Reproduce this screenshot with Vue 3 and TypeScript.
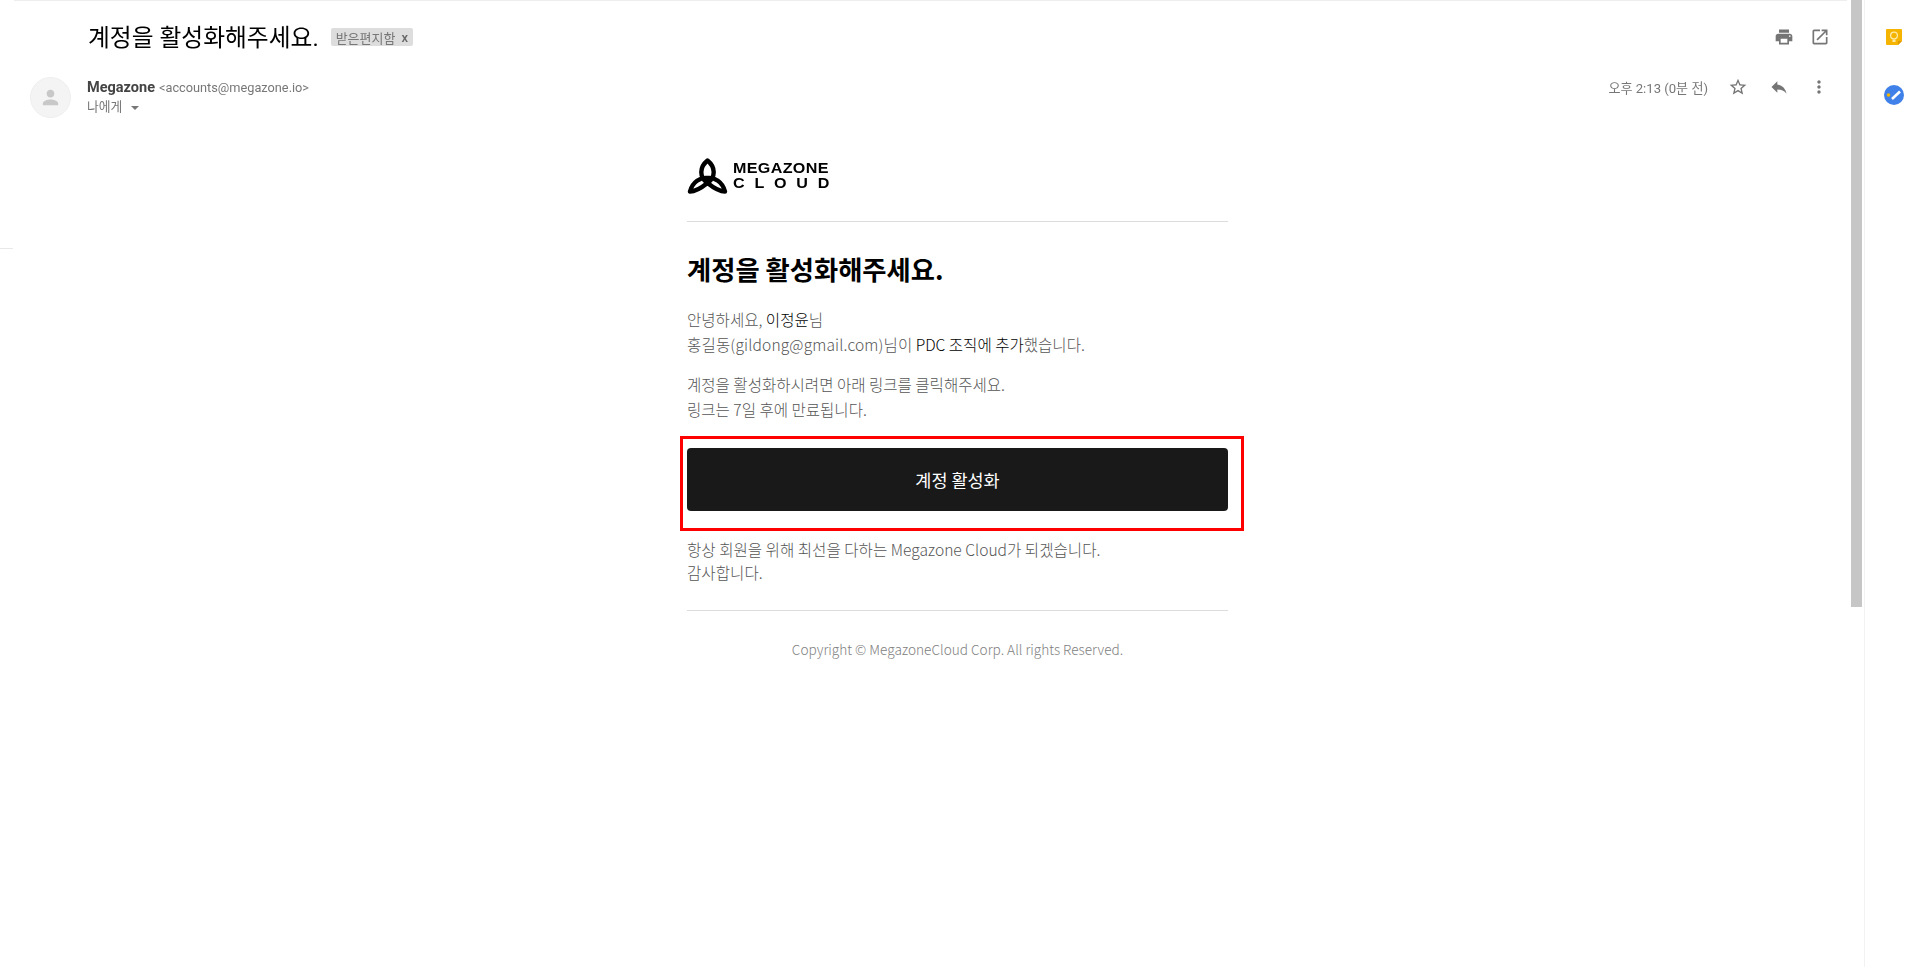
<script setup lang="ts">
const printPath = 'M19 8H5c-1.66 0-3 1.34-3 3v6h4v4h12v-4h4v-6c0-1.66-1.34-3-3-3zm-3 11H8v-5h8v5zm3-7c-.55 0-1-.45-1-1s.45-1 1-1 1 .45 1 1-.45 1-1 1zm-1-9H6v4h12V3z'
const openPath = 'M19 19H5V5h7V3H5c-1.11 0-2 .9-2 2v14c0 1.1.89 2 2 2h14c1.1 0 2-.9 2-2v-7h-2v7zM14 3v2h3.59l-9.83 9.83 1.41 1.41L19 6.41V10h2V3h-7z'
const starPath = 'M22 9.24l-7.19-.62L12 2 9.19 8.63 2 9.24l5.46 4.73L5.82 21 12 17.27 18.18 21l-1.63-7.03L22 9.24zM12 15.4l-3.76 2.27 1-4.28-3.32-2.88 4.38-.38L12 6.1l1.71 4.04 4.38.38-3.32 2.88 1 4.28L12 15.4z'
const replyPath = 'M10 9V5l-7 7 7 7v-4.1c5 0 8.5 1.6 11 5.1-1-5-4-10-11-11z'
const morePath = 'M12 8c1.1 0 2-.9 2-2s-.9-2-2-2-2 .9-2 2 .9 2 2 2zm0 2c-1.1 0-2 .9-2 2s.9 2 2 2 2-.9 2-2-.9-2-2-2zm0 6c-1.1 0-2 .9-2 2s.9 2 2 2 2-.9 2-2-.9-2-2-2z'
const personPath = 'M12 12c2.21 0 4-1.79 4-4s-1.79-4-4-4-4 1.79-4 4 1.79 4 4 4zm0 2c-2.67 0-8 1.34-8 4v2h16v-2c0-2.66-5.33-4-8-4z'
</script>

<template>
  <div class="page">
    <main class="mail">
      <header class="subject">
        <h1 class="subject-text">계정을 활성화해주세요.</h1>
        <span class="chip">받은편지함<span class="chip-x">x</span></span>
        <div class="subject-icons">
          <svg class="icon" viewBox="0 0 24 24"><path :d="printPath" /></svg>
          <svg class="icon" viewBox="0 0 24 24"><path :d="openPath" /></svg>
        </div>
      </header>

      <section class="sender">
        <div class="avatar">
          <svg class="avatar-icon" viewBox="0 0 24 24"><path :d="personPath" /></svg>
        </div>
        <div class="who">
          <div class="who-line"><b class="name">Megazone</b><span class="addr">&lt;accounts@megazone.io&gt;</span></div>
          <div class="to">나에게<i class="caret"></i></div>
        </div>
        <div class="meta">
          <span class="time">오후 2:13 (0분 전)</span>
          <svg class="icon star" viewBox="0 0 24 24"><path :d="starPath" /></svg>
          <svg class="icon reply" viewBox="0 0 24 24"><path :d="replyPath" /></svg>
          <svg class="icon more" viewBox="0 0 24 24"><path :d="morePath" /></svg>
        </div>
      </section>

      <article class="letter">
        <div class="logo">
          <svg class="logo-mark" viewBox="0 0 40 36" fill="none" stroke="#000" stroke-width="4.400" stroke-linejoin="round">
            <path d="M20 2.500C12 9 11.500 19 20 25C25 29 32 33.500 37.500 33.500C35 24 27 19 20 20C13 19 5 24 2.500 33.500C8 33.500 15 29 20 25C28.500 19 28 9 20 2.500Z" />
          </svg>
          <div class="logo-text">
            <span class="logo-line">MEGAZONE</span>
            <span class="logo-line wide">CLOUD</span>
          </div>
        </div>
        <hr class="rule" />
        <h2 class="heading">계정을 활성화해주세요.</h2>
        <p class="para">안녕하세요, <span class="em">이정윤</span>님<br /><span class="latin">홍길동(gildong@gmail.com)</span>님이 <span class="em">PDC 조직에 추가</span>했습니다.</p>
        <p class="para second">계정을 활성화하시려면 아래 링크를 클릭해주세요.<br />링크는 7일 후에 만료됩니다.</p>
        <div class="cta">
          <a class="button">계정 활성화</a>
          <div class="highlight"></div>
        </div>
        <p class="closing">항상 회원을 위해 최선을 다하는 Megazone Cloud가 되겠습니다.<br />감사합니다.</p>
        <hr class="rule lower" />
        <p class="copyright">Copyright © MegazoneCloud Corp. All rights Reserved.</p>
      </article>
    </main>

    <div class="scrollbar"><div class="thumb"></div></div>

    <aside class="rail">
      <svg class="keep" viewBox="0 0 16 16">
        <path d="M1 0H15a1 1 0 0 1 1 1V12L12 16H1a1 1 0 0 1-1-1V1a1 1 0 0 1 1-1Z" fill="#f4b400" />
        <path d="M12 16V12H16Z" fill="#e09a00" />
        <circle cx="8" cy="6.500" r="3.400" fill="none" stroke="#fde9a8" stroke-width="1.300" />
        <rect x="6.500" y="10.500" width="3" height="2.500" fill="#fde9a8" />
      </svg>
      <svg class="tasks" viewBox="0 0 20 20">
        <circle cx="10" cy="10" r="10" fill="#3f81e8" />
        <path d="M8 14L16 6.500" stroke="#fff" stroke-width="2.600" fill="none" />
        <circle cx="4.500" cy="10" r="1.800" fill="#f4b400" />
      </svg>
    </aside>

    <div class="edge-line"></div>
  </div>
</template>

<style>
html, body { margin: 0; background: #fff; }
</style>

<style scoped>
.page {
  position: relative;
  display: flex;
  width: 1920px;
  height: 967px;
  overflow: hidden;
  background: #fff;
  font-family: "Noto Sans CJK KR", "Noto Sans", sans-serif;
}
.mail {
  box-sizing: border-box;
  width: 1851px;
  flex: none;
}
.subject {
  display: flex;
  align-items: center;
  height: 72px;
  margin: 0 4px 0 14px;
  padding: 0 17px 0 74px;
  border-top: 1px solid #eee;
  filter: blur(0.35px);
}
.subject-text {
  margin: 1px 0 0;
  font-family: Roboto, "Noto Sans CJK KR", sans-serif;
  font-size: 23.750px;
  font-weight: 400;
  line-height: 30px;
  color: #000;
}
.chip {
  display: flex;
  align-items: center;
  height: 18px;
  margin-left: 12px;
  padding: 0 5px;
  border-radius: 2px;
  background: #ddd;
  font-size: 13px;
  color: #777;
}
.chip-x {
  margin-left: 6px;
  font-family: Roboto, sans-serif;
  font-weight: 500;
  color: #666;
}
.subject-icons {
  display: flex;
  gap: 16px;
  margin-left: auto;
}
.icon {
  width: 20px;
  height: 20px;
  fill: #757575;
  display: block;
}
.sender {
  display: flex;
  align-items: flex-start;
  height: 46px;
  padding-left: 30px;
  padding-right: 22px;
  margin-top: 4px;
  filter: blur(0.35px);
}
.avatar {
  box-sizing: border-box;
  display: flex;
  align-items: center;
  justify-content: center;
  width: 41px;
  height: 41px;
  border: 1px solid #eee;
  border-radius: 50%;
  background: #f4f4f4;
}
.avatar-icon {
  width: 23px;
  height: 23px;
  fill: #c8c8c8;
}
.who {
  margin-left: 17px;
}
.who-line {
  display: flex;
  align-items: baseline;
  font-family: Roboto, sans-serif;
  line-height: 18px;
  margin-top: 2px;
  margin-left: -1px;
}
.name {
  font-size: 14.500px;
  font-weight: 700;
  color: #444;
}
.addr {
  margin-left: 4px;
  font-size: 12.750px;
  color: #777;
}
.to {
  display: flex;
  align-items: center;
  margin-top: 0;
  margin-left: -1px;
  font-size: 12.800px;
  line-height: 18px;
  color: #777;
}
.caret {
  width: 0;
  height: 0;
  margin-left: 9px;
  margin-top: 4px;
  border-left: 4px solid transparent;
  border-right: 4px solid transparent;
  border-top: 4px solid #777;
}
.meta {
  display: flex;
  align-items: center;
  margin-left: auto;
  height: 20px;
}
.time {
  font-family: Roboto, "Noto Sans CJK KR", sans-serif;
  font-size: 13.100px;
  color: #777;
  margin-right: 20px;
}
.reply { margin-left: 21px; }
.more { margin-left: 20px; }
.letter {
  width: 541px;
  margin-left: 687px;
  margin-top: 35px;
}
.logo {
  display: flex;
  align-items: center;
  height: 36px;
}
.logo-mark {
  width: 41px;
  height: 36px;
}
.logo-text {
  display: flex;
  flex-direction: column;
  margin-left: 5px;
  font-family: "Liberation Sans", sans-serif;
  font-weight: 700;
  color: #000;
}
.logo-line {
  font-size: 14px;
  line-height: 15px;
  letter-spacing: 0.300px;
  white-space: nowrap;
  transform: scaleX(1.150);
  transform-origin: left;
}
.wide {
  letter-spacing: 8.500px;
}
.rule {
  height: 1px;
  margin: 27px 0 0;
  border: 0;
  background: #dcdcdc;
}
.heading {
  margin: 29px 0 0;
  font-size: 26.300px;
  font-weight: 700;
  line-height: 36px;
  color: #000;
}
.para {
  margin: 20px 0 0;
  font-size: 15.550px;
  font-weight: 300;
  line-height: 25px;
  color: #555;
}
.second { margin-top: 15px; }
.latin { letter-spacing: 0.150px; }
.em {
  color: #000;
}
.cta {
  position: relative;
  margin-top: 26px;
}
.button {
  display: flex;
  align-items: center;
  justify-content: center;
  height: 63px;
  border-radius: 4px;
  background: #191919;
  font-size: 17.500px;
  font-weight: 400;
  color: #fff;
}
.highlight {
  position: absolute;
  left: -7px;
  right: -16px;
  top: -12px;
  bottom: -20px;
  border: 3px solid #f00;
}
.closing {
  margin: 27px 0 0;
  font-size: 15.600px;
  font-weight: 300;
  line-height: 22.500px;
  color: #555;
}
.lower { margin-top: 27px; }
.copyright {
  margin: 27.500px 0 0;
  text-align: center;
  font-size: 13.650px;
  font-weight: 300;
  line-height: 20px;
  color: #808080;
}
.scrollbar {
  width: 11px;
  flex: none;
}
.thumb {
  height: 607px;
  background: #c6c6c6;
}
.rail {
  box-sizing: border-box;
  flex: 1;
  margin-left: 2px;
  border-left: 1px solid #f2f2f2;
  display: flex;
  flex-direction: column;
  align-items: center;
  padding-top: 29px;
  padding-left: 2px;
  filter: blur(0.35px);
}
.keep {
  width: 16px;
  height: 16px;
}
.tasks {
  width: 20px;
  height: 20px;
  margin-top: 40px;
}
.edge-line {
  position: absolute;
  left: 0;
  top: 248px;
  width: 13px;
  height: 1px;
  background: #e8e8e8;
}
</style>
